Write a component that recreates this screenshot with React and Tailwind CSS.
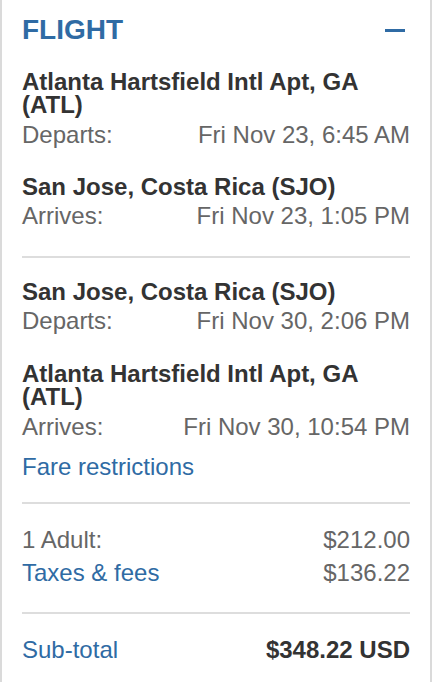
import React from "react";

const blue = "text-[#2f6ba4]";

function Row({ label, value }) {
  return (
    <div className="flex justify-between text-[#666666] leading-[24px]">
      <span>{label}</span>
      <span>{value}</span>
    </div>
  );
}

function City({ children, className = "" }) {
  return (
    <div className={"font-bold text-[#333333] leading-[23px] " + className}>{children}</div>
  );
}

export default function App() {
  return (
    <div
      className="w-[432px] h-[682px] bg-white border-x-2 border-[#dadada] px-[20px] text-[24px]"
      style={{ fontFamily: '"Liberation Sans", Arial, sans-serif' }}
    >
      <div className="flex items-center justify-between pt-[14px] h-[46px]">
        <h2 className={"font-bold text-[28px] leading-[32px] " + blue}>FLIGHT</h2>
        <div className="w-[20px] h-[3px] bg-[#2f6ba4] mr-[5px]" />
      </div>

      <City className="mt-[24px]">Atlanta Hartsfield Intl Apt, GA (ATL)</City>
      <div className="mt-[7px]">
        <Row label="Departs:" value="Fri Nov 23, 6:45 AM" />
      </div>
      <City className="mt-[28px]">San Jose, Costa Rica (SJO)</City>
      <div className="mt-[6px]">
        <Row label="Arrives:" value="Fri Nov 23, 1:05 PM" />
      </div>

      <div className="mt-[28px] h-[2px] bg-[#dddddd]" />

      <City className="mt-[22px]">San Jose, Costa Rica (SJO)</City>
      <div className="mt-[6px]">
        <Row label="Departs:" value="Fri Nov 30, 2:06 PM" />
      </div>
      <City className="mt-[29px]">Atlanta Hartsfield Intl Apt, GA (ATL)</City>
      <div className="mt-[7px]">
        <Row label="Arrives:" value="Fri Nov 30, 10:54 PM" />
      </div>
      <div className={"mt-[16px] leading-[24px] " + blue}>Fare restrictions</div>

      <div className="mt-[23px] h-[2px] bg-[#dddddd]" />

      <div className="mt-[24px]">
        <Row label="1 Adult:" value="$212.00" />
      </div>
      <div className="mt-[9px] flex justify-between leading-[24px]">
        <span className={blue}>Taxes &amp; fees</span>
        <span className="text-[#666666]">$136.22</span>
      </div>

      <div className="mt-[27px] h-[2px] bg-[#dddddd]" />

      <div className="mt-[24px] flex justify-between leading-[24px]">
        <span className={blue}>Sub-total</span>
        <span className="font-bold text-[#333333]">$348.22 USD</span>
      </div>
    </div>
  );
}
